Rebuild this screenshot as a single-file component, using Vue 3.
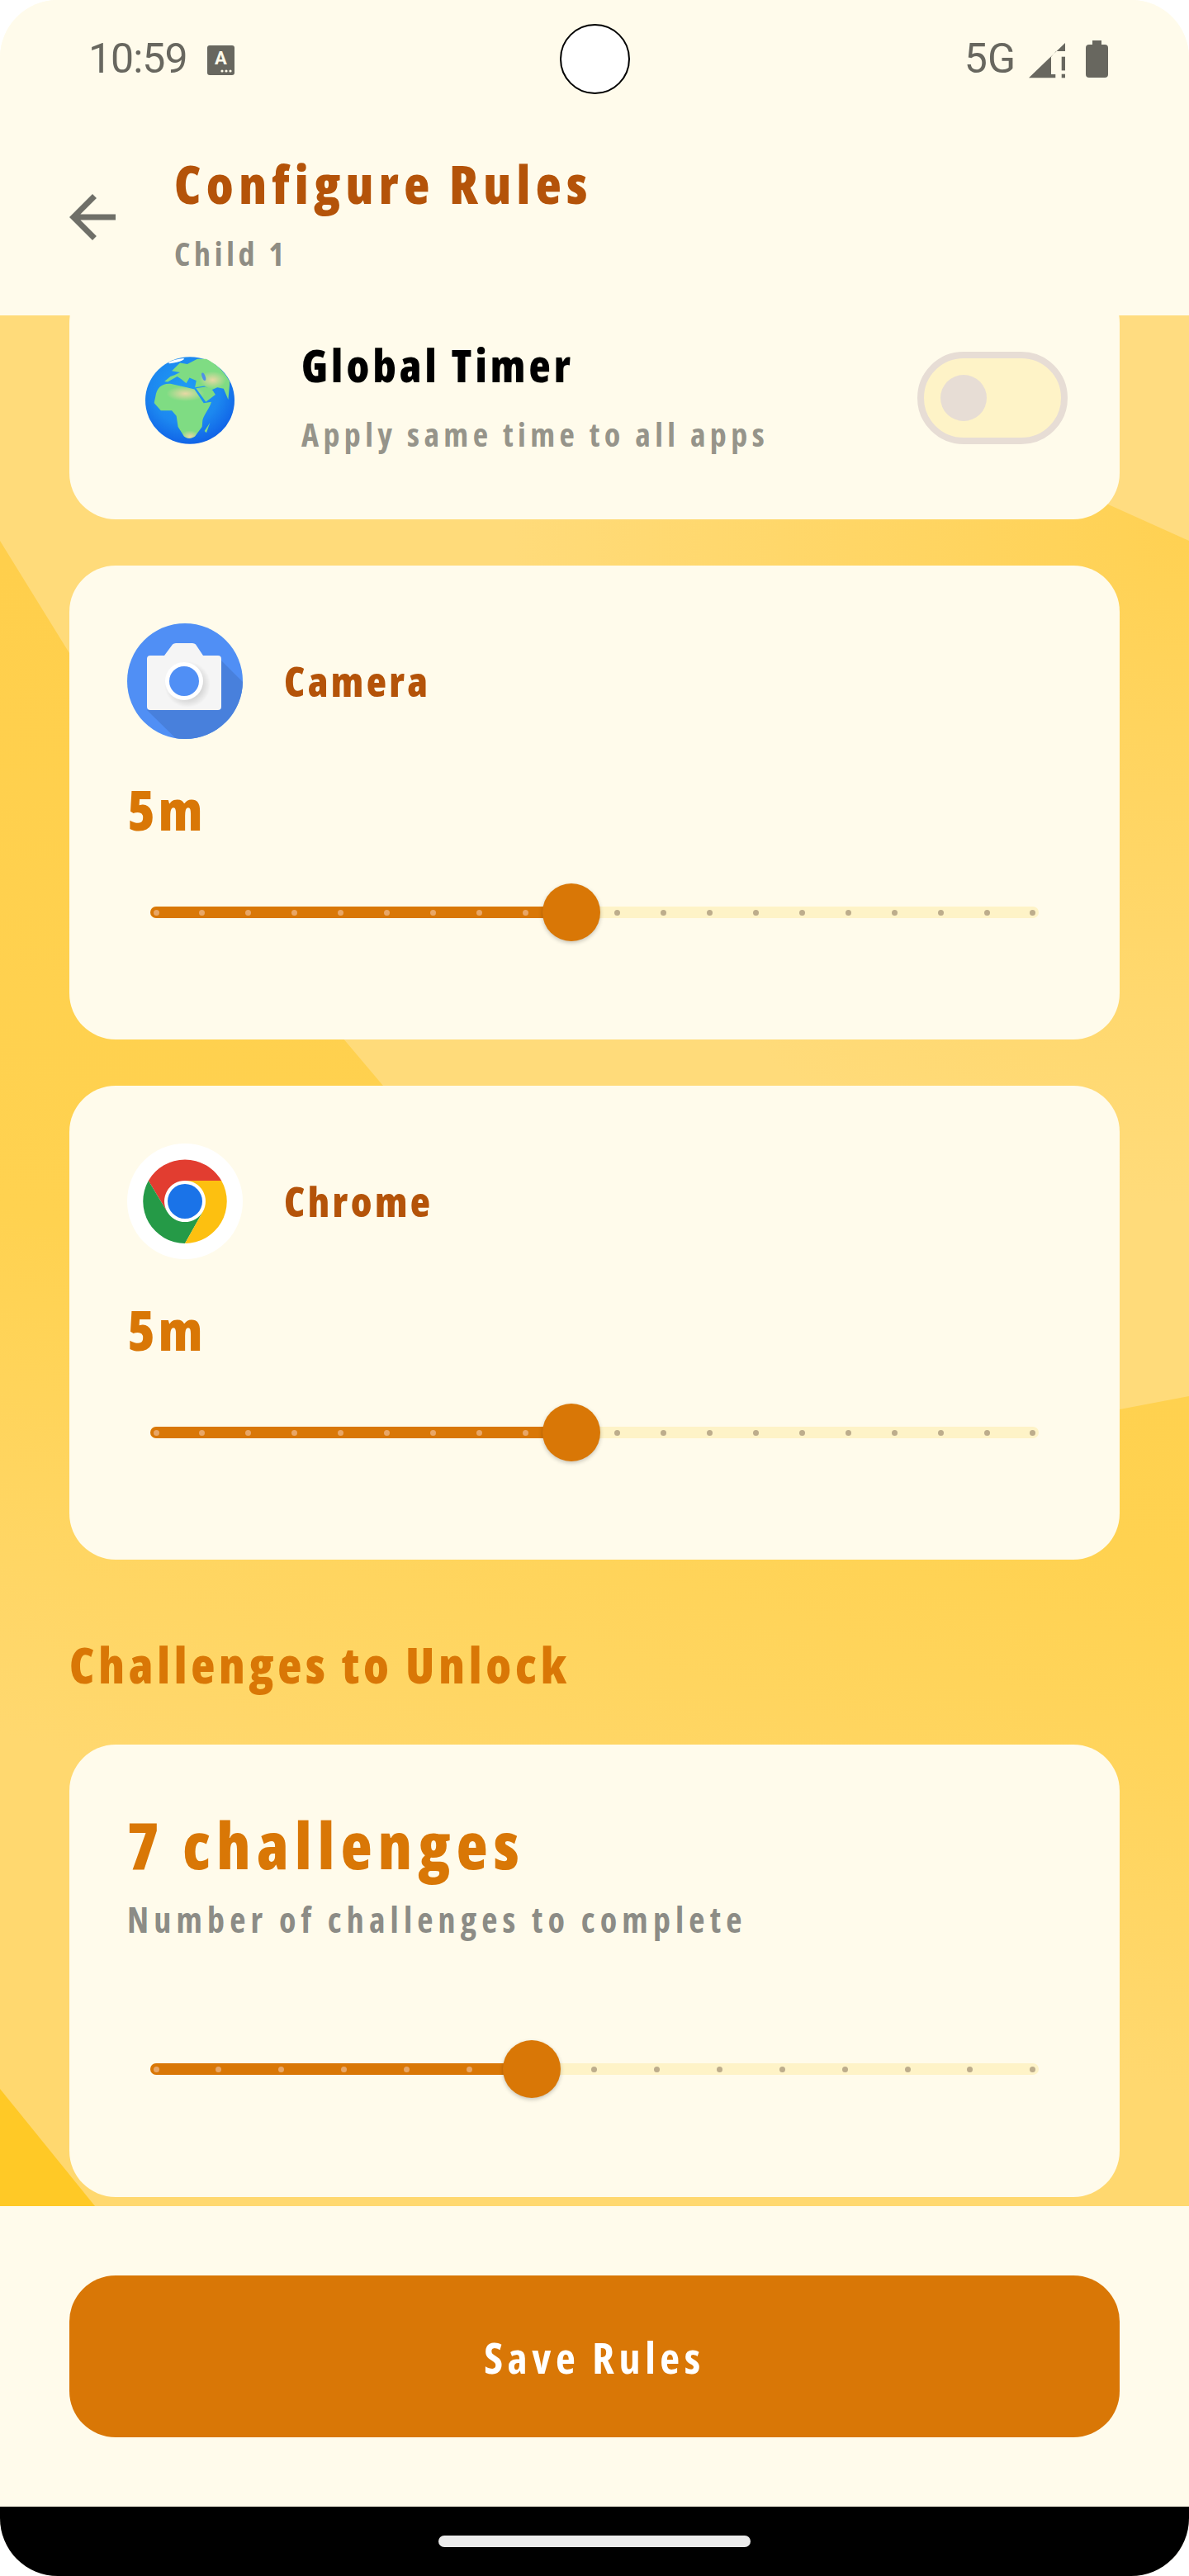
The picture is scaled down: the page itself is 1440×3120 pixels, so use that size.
<script setup>
const TRACK_START = 7
const TRACK_SPAN = 1062

function makeSlider(index, steps) {
  const ticks = []
  for (let i = 0; i < steps; i++) ticks.push(i <= index)
  return { ticks, pos: TRACK_START + (TRACK_SPAN * index) / (steps - 1) }
}

const apps = [
  { name: 'Camera', icon: 'camera', value: '5m', slider: makeSlider(9, 20) },
  { name: 'Chrome', icon: 'chrome', value: '5m', slider: makeSlider(9, 20) }
]

const challengeSlider = makeSlider(6, 15)
</script>

<template>
  <div class="screen">
    <header class="top">
      <div class="status">
        <span class="clock">10:59</span>
        <svg class="kb" width="33" height="36" viewBox="0 0 33 36">
          <rect width="33" height="36" rx="3" fill="#68675f" />
          <text x="16.5" y="23" text-anchor="middle" font-family="Roboto, sans-serif" font-weight="700" font-size="22" fill="#fffbeb">A</text>
          <circle cx="18" cy="31" r="1.6" fill="#fffbeb" />
          <circle cx="23" cy="31" r="1.6" fill="#fffbeb" />
          <circle cx="28" cy="31" r="1.6" fill="#fffbeb" />
        </svg>
        <span class="net">5G</span>
        <svg class="signal" width="44" height="43" viewBox="0 0 44 43" fill="#68675f">
          <path d="M0 42.3 44 0v10H33l-6 7v21h5.3v4.3z" />
          <rect x="39.7" y="16.7" width="4.3" height="16.7" />
          <rect x="39.7" y="37.7" width="4.3" height="4.6" />
        </svg>
        <svg class="battery" width="27" height="45" viewBox="0 0 27 45" fill="#68675f">
          <rect x="8" y="0" width="11" height="7" />
          <rect x="0" y="5" width="27" height="40" rx="4" />
        </svg>
      </div>
      <div class="hole"></div>
      <div class="appbar">
        <svg class="back" width="84" height="84" viewBox="0 0 24 24" fill="#6f6f68">
          <path d="M20 11H7.83l5.59-5.59L12 4l-8 8 8 8 1.41-1.41L7.83 13H20v-2z" />
        </svg>
        <div>
          <div class="title">Configure Rules</div>
          <div class="child">Child 1</div>
        </div>
      </div>
    </header>

    <main class="body">
      <svg class="bg" width="1440" height="2290" viewBox="0 382 1440 2290">
        <defs>
          <linearGradient id="base" gradientUnits="userSpaceOnUse" x1="400" y1="800" x2="0" y2="2100">
            <stop offset="0" stop-color="#ffcf4c" />
            <stop offset="0.55" stop-color="#ffd250" />
            <stop offset="1" stop-color="#ffd86f" />
          </linearGradient>
          <radialGradient id="light" gradientUnits="userSpaceOnUse" cx="1440" cy="640" r="820">
            <stop offset="0" stop-color="#ffd152" />
            <stop offset="1" stop-color="#ffdb7a" />
          </radialGradient>
        </defs>
        <rect x="0" y="382" width="1440" height="2290" fill="url(#base)" />
        <polygon points="0,382 1440,382 1440,1691 1356,1707 780,1750 464,1315 415,1257 84,791 0,655" fill="url(#light)" />
        <polygon points="900,382 1440,382 1440,655 1340,610 900,560" fill="#ffdc80" />
        <polygon points="0,2530 115,2672 0,2672" fill="#ffc926" />
      </svg>

      <div class="content">
        <section class="card global">
          <svg class="globe" width="108" height="106" viewBox="108 93 327 320">
            <defs>
              <radialGradient id="sea" cx="0.45" cy="0.38" r="0.65">
                <stop offset="0" stop-color="#1f9df5" />
                <stop offset="0.6" stop-color="#1c88f0" />
                <stop offset="1" stop-color="#0f5fe6" />
              </radialGradient>
              <radialGradient id="sand">
                <stop offset="0" stop-color="#e8d8a4" />
                <stop offset="1" stop-color="#e8d8a4" stop-opacity="0" />
              </radialGradient>
              <clipPath id="land">
                <path d="M145 240C150 205 170 190 200 192L260 205 288 212 322 263 350 258C345 280 325 300 318 325L316 350 290 385C275 395 262 395 250 385L228 350 222 310 205 290 165 290 140 262Z" />
                <path d="M205 145 235 115 262 120 300 100 330 100Q390 130 418 185L412 250 395 210 372 205 350 215 325 200 290 205 295 180 270 170 258 190 240 175 225 165 190 185 178 183 200 165 215 160 235 150Z" />
                <path d="M294 208 330 258 365 232 355 216 328 203Z" />
                <path d="M345 335 332 372 325 365Z" />
              </clipPath>
            </defs>
            <ellipse cx="271.5" cy="253" rx="163.5" ry="160" fill="url(#sea)" />
            <g clip-path="url(#land)">
              <rect x="108" y="93" width="327" height="320" fill="#7fdc83" />
              <ellipse cx="255" cy="228" rx="70" ry="28" fill="url(#sand)" />
              <ellipse cx="355" cy="178" rx="50" ry="32" fill="url(#sand)" />
              <ellipse cx="272" cy="385" rx="35" ry="22" fill="url(#sand)" />
            </g>
            <ellipse cx="322" cy="166" rx="6" ry="15" fill="#4f8fe8" transform="rotate(-20 322 166)" />
            <ellipse cx="222" cy="108" rx="30" ry="5" fill="#fff" transform="rotate(-15 222 108)" />
          </svg>
          <div class="global-text">
            <div class="global-title">Global Timer</div>
            <div class="global-sub">Apply same time to all apps</div>
          </div>
          <div class="toggle"><span class="toggle-knob"></span></div>
        </section>

        <section v-for="app in apps" :key="app.name" class="card app">
          <div class="app-row">
            <svg v-if="app.icon === 'camera'" width="140" height="140" viewBox="0 0 140 140">
              <defs>
                <clipPath id="camclip"><circle cx="70" cy="70" r="70" /></clipPath>
                <radialGradient id="lensshade">
                  <stop offset="0.6" stop-color="#000" stop-opacity="0.14" />
                  <stop offset="1" stop-color="#000" stop-opacity="0" />
                </radialGradient>
              </defs>
              <circle cx="70" cy="70" r="70" fill="#508ff5" />
              <polygon points="114,45 170,101 170,170 90,170 24,105" fill="#4880dc" clip-path="url(#camclip)" />
              <path d="M28 39H45L55 25.500Q56.500 24 59 24H79Q81.500 24 83 25.500L92 39H110Q114 39 114 43V101Q114 105 110 105H28Q24 105 24 101V43Q24 39 28 39Z" fill="#f5f5f5" />
              <circle cx="73" cy="74" r="28" fill="url(#lensshade)" />
              <circle cx="69" cy="70" r="23" fill="#fff" />
              <circle cx="69" cy="70" r="18" fill="#508ff5" />
            </svg>
            <svg v-else width="140" height="140" viewBox="0 0 140 140">
              <circle cx="70" cy="70" r="70" fill="#fff" />
              <path d="M25.800 45A51 51 0 0 1 114.200 45H70A25 25 0 0 0 48.350 82.500Z" fill="#e23d30" />
              <path d="M25.800 45L48.350 82.500A25 25 0 0 0 91.650 82.500L70 121A51 51 0 0 1 25.800 45Z" fill="#259a47" />
              <path d="M114.200 45A51 51 0 0 1 70 121L91.650 82.500A25 25 0 0 0 70 45Z" fill="#fdc010" />
              <circle cx="70" cy="70" r="21" fill="#1a73e8" />
            </svg>
            <span class="app-name">{{ app.name }}</span>
          </div>
          <div class="app-value">{{ app.value }}</div>
          <div class="slider">
            <div class="track">
              <div class="track-fill" :style="{ width: app.slider.pos + 'px' }"></div>
              <div class="ticks">
                <span v-for="(on, i) in app.slider.ticks" :key="i" class="tick" :class="{ on }"></span>
              </div>
              <span class="thumb" :style="{ left: app.slider.pos + 'px' }"></span>
            </div>
          </div>
        </section>

        <h2 class="heading">Challenges to Unlock</h2>

        <section class="card challenges">
          <div class="count">7 challenges</div>
          <div class="count-sub">Number of challenges to complete</div>
          <div class="slider">
            <div class="track">
              <div class="track-fill" :style="{ width: challengeSlider.pos + 'px' }"></div>
              <div class="ticks">
                <span v-for="(on, i) in challengeSlider.ticks" :key="i" class="tick" :class="{ on }"></span>
              </div>
              <span class="thumb" :style="{ left: challengeSlider.pos + 'px' }"></span>
            </div>
          </div>
        </section>
      </div>
    </main>

    <footer class="bottom">
      <button class="save">Save Rules</button>
    </footer>

    <div class="nav"><span class="home"></span></div>
  </div>
</template>

<style scoped>
.screen {
  position: relative;
  width: 1440px;
  height: 3120px;
  border-radius: 70px;
  overflow: hidden;
  display: flex;
  flex-direction: column;
  background: #fffbeb;
  font-family: "Open Sans", Roboto, "Liberation Sans", sans-serif;
  font-stretch: 75%;
  font-weight: 700;
}
.top {
  height: 382px;
  flex: none;
  background: #fffbeb;
  position: relative;
  z-index: 2;
}
.status {
  height: 144px;
  display: flex;
  align-items: flex-start;
  padding: 0 98px 0 107px;
  box-sizing: border-box;
  color: #68675f;
  font-family: Roboto, sans-serif;
  font-stretch: 100%;
  font-weight: 400;
  font-size: 50px;
}
.clock {
  line-height: 56px;
  margin-top: 43px;
  letter-spacing: -1px;
}
.kb {
  margin: 55px 0 0 24px;
}
.net {
  line-height: 56px;
  margin: 43px 0 0 auto;
}
.signal {
  margin: 52px 0 0 16px;
}
.battery {
  margin: 49px 0 0 25px;
}
.hole {
  position: absolute;
  left: 678px;
  top: 29px;
  width: 85px;
  height: 85px;
  box-sizing: border-box;
  border: 2px solid #000;
  border-radius: 50%;
  background: #fff;
}
.appbar {
  display: flex;
  align-items: flex-start;
  padding: 43px 0 0 70px;
}
.back {
  margin: 34px 57px 0 0;
  flex: none;
}
.title {
  font-size: 64px;
  font-weight: 800;
  line-height: 72px;
  color: #b45309;
  letter-spacing: 6.4px;
}
.child {
  margin-top: 24px;
  font-size: 40px;
  line-height: 48px;
  color: #8f8d84;
  letter-spacing: 4.7px;
}
.body {
  position: relative;
  flex: 1;
  overflow: hidden;
}
.bg {
  position: absolute;
  left: 0;
  top: 0;
}
.content {
  position: relative;
  padding: 0 84px;
  margin-top: -47px;
  display: flex;
  flex-direction: column;
}
.card {
  background: #fffbeb;
  border-radius: 56px;
}
.global {
  height: 294px;
  display: flex;
  align-items: center;
  padding: 0 63px 0 92px;
  box-sizing: border-box;
  margin-bottom: 56px;
}
.globe {
  flex: none;
  margin: 5px 81px 0 0;
}
.global-text {
  flex: 1;
  margin-top: -5px;
}
.global-title {
  font-size: 54px;
  font-weight: 800;
  line-height: 64px;
  color: #000;
  letter-spacing: 4.1px;
}
.global-sub {
  margin-top: 28px;
  font-size: 40px;
  line-height: 48px;
  color: #96948a;
  letter-spacing: 5.4px;
}
.toggle {
  width: 182px;
  height: 112px;
  box-sizing: border-box;
  border: 8px solid #e7ddd5;
  border-radius: 56px;
  background: #fef3c7;
  display: flex;
  align-items: center;
  padding-left: 20px;
  flex: none;
}
.toggle-knob {
  width: 56px;
  height: 56px;
  border-radius: 50%;
  background: #e7ddd5;
}
.app {
  padding: 70px 70px 119px;
  margin-bottom: 56px;
}
.app-row {
  display: flex;
  align-items: center;
  gap: 50px;
  height: 140px;
}
.app-name {
  font-size: 50px;
  font-weight: 800;
  line-height: 60px;
  color: #b45309;
  letter-spacing: 3.4px;
}
.app-value {
  margin-top: 45px;
  font-size: 68px;
  font-weight: 800;
  line-height: 80px;
  color: #d97706;
  letter-spacing: 4px;
}
.slider {
  height: 70px;
  margin-top: 50px;
  padding: 0 28px;
  display: flex;
  align-items: center;
}
.track {
  position: relative;
  width: 100%;
  height: 14px;
  border-radius: 7px;
  background: #fef3c7;
}
.track-fill {
  height: 100%;
  border-radius: 7px 0 0 7px;
  background: #d97706;
}
.ticks {
  position: absolute;
  inset: 0;
  padding: 0 3.5px;
  display: flex;
  justify-content: space-between;
  align-items: center;
}
.tick {
  width: 7px;
  height: 7px;
  border-radius: 50%;
  background: #bdad8c;
}
.tick.on {
  background: #e8a666;
}
.thumb {
  position: absolute;
  top: 50%;
  width: 70px;
  height: 70px;
  margin: -35px 0 0 -35px;
  border-radius: 50%;
  background: #d97706;
  box-shadow: 0 2px 5px rgba(0, 0, 0, 0.22);
}
.heading {
  margin: 35px 0 61px;
  font-size: 60px;
  line-height: 72px;
  font-weight: 800;
  color: #d97706;
  letter-spacing: 4.8px;
}
.challenges {
  padding: 75px 70px 120px;
}
.count {
  font-size: 78px;
  font-weight: 800;
  line-height: 92px;
  color: #d97706;
  letter-spacing: 7.4px;
}
.count-sub {
  margin-top: 20px;
  font-size: 42px;
  line-height: 50px;
  color: #8c8c86;
  letter-spacing: 6.15px;
}
.challenges .slider {
  margin-top: 121px;
}
.bottom {
  height: 364px;
  flex: none;
  box-sizing: border-box;
  padding: 84px 84px 0;
  background: #fffbeb;
  position: relative;
}
.save {
  display: block;
  width: 100%;
  height: 196px;
  border: 0;
  border-radius: 56px;
  background: #d97706;
  color: #fff;
  font-family: inherit;
  font-stretch: inherit;
  font-weight: 700;
  font-size: 52px;
  letter-spacing: 5.6px;
}
.nav {
  height: 84px;
  flex: none;
  background: #000;
  display: flex;
  justify-content: center;
  padding-top: 35px;
  box-sizing: border-box;
}
.home {
  width: 378px;
  height: 14px;
  border-radius: 7px;
  background: #ebebeb;
}
</style>

<style>
html, body {
  background: #fff;
}
</style>
